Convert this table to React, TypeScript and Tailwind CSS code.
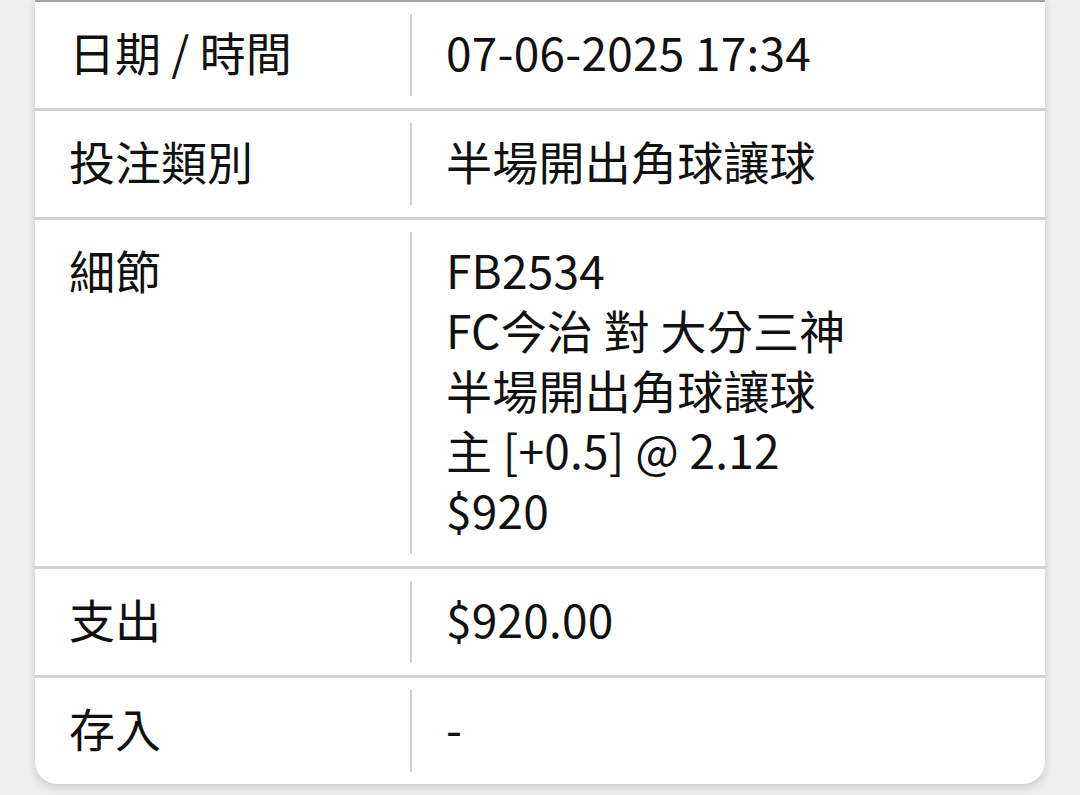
import React from 'react';

interface Row {
  label: string;
  value: string[];
}

const rows: Row[] = [
  { label: '日期 / 時間', value: ['07-06-2025 17:34'] },
  { label: '投注類別', value: ['半場開出角球讓球'] },
  {
    label: '細節',
    value: ['FB2534', 'FC今治 對 大分三神', '半場開出角球讓球', '主 [+0.5] @ 2.12', '$920'],
  },
  { label: '支出', value: ['$920.00'] },
  { label: '存入', value: ['-'] },
];

export default function App() {
  return (
    <div
      className="min-h-[795px] w-[1080px] overflow-hidden bg-[#efefef]"
      style={{ fontFamily: '"Noto Sans CJK TC", "Noto Sans", sans-serif' }}
    >
      <div className="mx-[35px] w-[1010px] overflow-hidden rounded-b-[22px] bg-white shadow-[0_3px_10px_rgba(0,0,0,0.18)]">
        <div className="h-[2px] bg-[#a3a3a3]" />
        {rows.map((row, i) => (
          <div
            key={row.label}
            className={
              i < rows.length - 1
                ? 'flex border-b-[3px] border-[#d3d3d3]'
                : 'flex'
            }
          >
            {/* label column */}
            <div className="w-[375px] shrink-0 pt-[19px] pb-[27px] pl-[34px] text-[46px] leading-[60px] text-[#111]">
              {row.label}
            </div>
            <div className="my-[12px] w-[2px] shrink-0 bg-[#cfcfcf]" />
            {/* value column */}
            <div className="flex-1 pt-[19px] pb-[27px] pl-[34px] text-[46px] leading-[60px] tracking-[0.005em] text-[#111]">
              {row.value.map((line, j) => (
                <div key={j}>{line}</div>
              ))}
            </div>
          </div>
        ))}
      </div>
    </div>
  );
}
